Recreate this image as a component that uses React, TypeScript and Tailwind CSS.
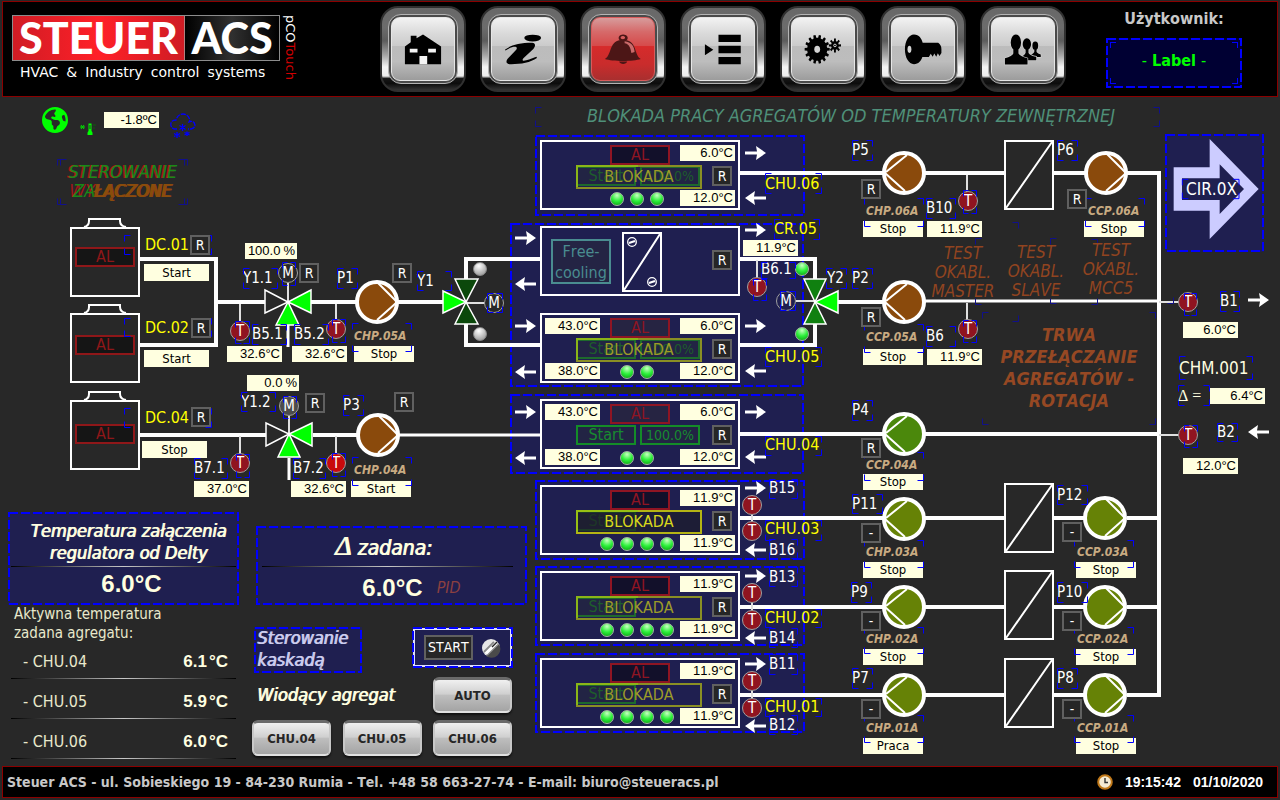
import React from 'react';
import { FaEarthAmericas } from 'react-icons/fa6';

type Kids = { children?: React.ReactNode };

const UI = "font-['DejaVu_Sans_Condensed','DejaVu_Sans',sans-serif] [font-kerning:none]";
const NUM = "font-['Liberation_Sans',sans-serif]";

/* Plan coordinates are counted from the top of the screen; the plan itself starts under the header. */
const PLAN_TOP = 97;

function At({ x, y, className = '', children }: { x: number; y: number; className?: string } & Kids) {
  return (
    <div className={`absolute whitespace-nowrap ${className}`} style={{ left: x, top: y - PLAN_TOP }}>
      {children}
    </div>
  );
}

function DashFrame() {
  return (
    <svg className="pointer-events-none absolute inset-0 h-full w-full overflow-visible" aria-hidden="true">
      <rect
        x="1"
        y="1"
        className="h-[calc(100%-2px)] w-[calc(100%-2px)]"
        fill="none"
        stroke="#0000ff"
        strokeWidth="2"
        strokeDasharray="9 3"
      />
    </svg>
  );
}

/* ---------- header ---------- */

function gear(cx: number, cy: number, r: number, depth: number, teeth: number) {
  const pts: string[] = [];
  const step = (Math.PI * 2) / teeth;
  for (let i = 0; i < teeth; i++) {
    const a = i * step;
    [[-0.3, r - depth], [-0.2, r], [0.2, r], [0.3, r - depth]].forEach(([k, d]) =>
      pts.push(`${(cx + Math.cos(a + k * step) * d).toFixed(1)} ${(cy + Math.sin(a + k * step) * d * 1.15).toFixed(1)}`),
    );
  }
  return `M${pts.join('L')}Z`;
}

const navItems: { label: string; alarm?: boolean; icon: React.ReactNode }[] = [
  {
    label: 'Home',
    icon: (
      <>
        <path d="M102 193V138L120 125V105H138V113L158 101L214 138V193Z" />
        <path d="M117 145h24v12h-24zM174 145h24v12h-24zM147 168h24v25h-24z" fill="#f4f4f4" />
      </>
    ),
  },
  {
    label: 'Info',
    icon: (
      <>
        <ellipse cx="188" cy="112" rx="26" ry="10.5" />
        <path d="M102 148C118 136 146 127 186 127C198 127 197 138 190 146L160 174C153 182 158 184 168 181C180 178 191 172 200 170L201 174C182 188 152 193 122 193C104 193 104 184 112 175L137 148C142 141 136 138 126 140C118 142 110 147 104 151Z" />
      </>
    ),
  },
  {
    label: 'Alarm',
    alarm: true,
    icon: (
      <g fill="#4c1616">
        <path fillRule="evenodd" d="M158 101a14 11 0 1 0 1 0ZM158 106a7 5 0 1 1-1 0Z" />
        <path d="M102 177C126 162 112 118 158 117C204 118 190 162 213 177C190 185 125 185 102 177Z" />
        <path d="M146 185h25c-2 10-23 10-25 0Z" />
        <path d="M163 122C184 124 193 138 194 155L184 158C181 140 176 130 163 128Z" fill="#c96a6a" />
      </g>
    ),
  },
  {
    label: 'Menu',
    icon: <path d="M102 131L128 148L102 165ZM144 102h69v22h-69zM144 136h69v23h-69zM144 171h69v22h-69z" />,
  },
  {
    label: 'Settings',
    icon: (
      <>
        <path d={gear(140, 147, 39, 8, 14)} />
        <ellipse cx="140" cy="147" rx="9" ry="11" fill="#d4d4d4" />
        <path d={gear(195, 135, 19, 7, 8)} />
        <circle cx="195" cy="135" r="4" fill="#000" stroke="#d4d4d4" strokeWidth="3" />
      </>
    ),
  },
  {
    label: 'Access',
    icon: (
      <>
        <path d="M130 101C146 101 154 114 157 127H205Q215 134 215 146V158L209 168L204 159L199 170L193 160L188 170L182 161L176 171H156C152 183 144 193 130 193C114 193 102 173 102 147S114 101 130 101Z" />
        <ellipse cx="116" cy="147" rx="6" ry="11" fill="#d4d4d4" />
      </>
    ),
  },
  {
    label: 'Users',
    icon: (
      <g stroke="#cfcfcf" strokeWidth="4" className="[paint-order:stroke]">
        <path d="M187 136a9 13 0 1 1 18 0a9 13 0 1 1 -18 0ZM183 171V163Q190 160 193 155V142H200V155Q204 160 213 163V171Z" />
        <path d="M157 131a13 18 0 1 1 26 0a13 18 0 1 1 -26 0ZM150 181V172Q163 166 166 158V140H175V158Q180 166 199 170V181Z" />
        <path d="M120 126a16 25 0 1 1 32 0a16 25 0 1 1 -32 0ZM102 194V175Q125 168 128 160V140H144V160Q148 168 172 175V194Z" />
      </g>
    ),
  },
];

function NavButton({ label, alarm, icon }: (typeof navItems)[number]) {
  return (
    <button
      aria-label={label}
      className="h-[86px] w-[86px] rounded-[18px] border-2 border-[#303030] bg-[linear-gradient(180deg,#686868_0%,#6c6c6c_24%,#5c5c5c_40%,#a8a8a8_58%,#f4f4f4_72%,#ececec_83%,#161616_86%,#0c0c0c_92%,#343434_100%)] p-[6px]"
    >
      <span className="block h-full w-full rounded-[13px] border border-[#b4b4b4] bg-[#4a4a4a] p-[2px]">
        <span
          className={`relative block h-full w-full overflow-hidden rounded-[9px] border ${
            alarm
              ? 'border-[#d85c5c] bg-[linear-gradient(180deg,#d79c9c_0%,#d66a6a_22%,#d64a4a_45%,#d62b2b_46%,#c92c2c_75%,#a92f2f_100%)]'
              : 'border-[#e6e6e6] bg-[linear-gradient(180deg,#f2f2f2_0%,#dadada_25%,#cbcbcb_45%,#bcbcbc_46%,#bdbdbd_70%,#9c9c9c_100%)]'
          }`}
        >
          <svg viewBox="62 50 192 192" className="absolute inset-0 h-full w-full" aria-hidden="true">
            {icon}
          </svg>
        </span>
      </span>
    </button>
  );
}

function Logo() {
  return (
    <div className="ml-[9px] mt-[9px] flex items-start gap-1">
      <div>
        <div className="flex h-[46px] border border-[#8c8c8c] font-['Lato',sans-serif] text-[43px] font-black leading-[43px] text-white">
          <span className="w-[172px] border-r border-[#b08080] bg-[linear-gradient(90deg,#d01c24,#ff2028_50%,#cf1c24)] text-center">STEUER</span>
          <span className="w-[94px] bg-[linear-gradient(90deg,#000,#303030_50%,#000)] text-center">ACS</span>
        </div>
        <div className="ml-2 flex gap-2 font-['DejaVu_Sans',sans-serif] text-[14px] leading-[22px] text-white">
          <span>HVAC</span>
          <span>&amp;</span>
          <span>Industry</span>
          <span>control</span>
          <span>systems</span>
        </div>
      </div>
      <div className="font-['DejaVu_Sans',sans-serif] text-[13px] leading-[12px] text-white [writing-mode:vertical-rl]">
        pCO<span className="text-[#d00000]">Touch</span>
      </div>
    </div>
  );
}

function Header() {
  return (
    <header className="mx-0.5 mt-px flex border border-[#8b0000] bg-black py-1">
      <div className="w-[377px]">
        <Logo />
      </div>
      <nav className="flex gap-[14px]">
        {navItems.map((n) => (
          <NavButton key={n.label} {...n} />
        ))}
      </nav>
      <div className={`ml-auto mr-[35px] w-[136px] text-center text-[16px] font-bold ${UI}`}>
        <div className="pb-[7px] pt-px leading-6 text-[#c8c8c8]">Użytkownik:</div>
        <button className="relative block h-[50px] w-full bg-[#000033] pb-1 text-[#00ff00]">
          <DashFrame />
          <span className="absolute inset-[4px] block">
            <Corner className="left-0 top-0 border-l border-t" />
            <Corner className="right-0 top-0 border-r border-t" />
            <Corner className="bottom-0 left-0 border-b border-l" />
            <Corner className="bottom-0 right-0 border-b border-r" />
          </span>
          <span className="font-normal">-</span> Label <span className="font-normal">-</span>
        </button>
      </div>
    </header>
  );
}

function Corner({ className }: { className: string }) {
  return <i className={`absolute h-[6px] w-[6px] border-[#0000ff] ${className}`} />;
}

/* ---------- plan: data ---------- */

type P2 = [number, number];

const brackets: [number, number, number, number][] = [
  [124, 235, 211, 254], [124, 318, 211, 336], [124, 408, 211, 427],
  [243, 268, 277, 288], [282, 262, 295, 285], [252, 324, 286, 344], [235, 321, 249, 343], [294, 324, 328, 344],
  [241, 392, 275, 411], [283, 396, 296, 418], [194, 458, 227, 478], [236, 454, 249, 477], [293, 458, 325, 478],
  [337, 268, 357, 288], [332, 319, 345, 342], [417, 271, 451, 290], [352, 323, 411, 351], [487, 293, 502, 312],
  [343, 395, 363, 415], [332, 453, 345, 476], [352, 457, 411, 485],
  [765, 173, 821, 193], [774, 219, 819, 239], [761, 262, 795, 278], [753, 279, 766, 300], [780, 291, 795, 310],
  [765, 347, 821, 366], [765, 436, 821, 455], [765, 520, 821, 540], [765, 609, 821, 627], [765, 698, 821, 716],
  [769, 479, 797, 498], [769, 539, 797, 558], [769, 567, 797, 586], [769, 628, 797, 647], [769, 654, 797, 674], [769, 715, 797, 734],
  [852, 140, 872, 160], [864, 198, 923, 226], [926, 198, 955, 218], [963, 190, 976, 213], [826, 268, 846, 288],
  [852, 268, 872, 288], [864, 324, 923, 352], [926, 326, 955, 346], [963, 320, 976, 342],
  [1057, 140, 1077, 160], [1085, 198, 1144, 226], [1184, 293, 1196, 315], [1220, 291, 1239, 311],
  [1179, 356, 1252, 379], [1178, 385, 1209, 405], [1184, 425, 1197, 447], [1217, 423, 1237, 441],
  [852, 400, 872, 420], [864, 452, 923, 480], [852, 494, 882, 513], [864, 540, 923, 567], [851, 582, 871, 602],
  [864, 627, 923, 653], [852, 668, 872, 688], [864, 715, 923, 742], [1057, 485, 1087, 504], [1074, 540, 1133, 567],
  [1057, 582, 1087, 602], [1074, 627, 1133, 654], [1057, 668, 1077, 688], [1074, 715, 1133, 742],
];

function bracket([a, b, c, d]: number[], n = 6) {
  const k = Math.min(n, Math.floor((c - a) / 2) - 1);
  return `M${a + k} ${b}H${a}V${b + n}M${c - k} ${b}H${c}V${b + n}M${a} ${d - n}V${d}H${a + k}M${c} ${d - n}V${d}H${c - k}`;
}

const faintBrackets =
  bracket([57, 159, 187, 204]) +
  bracket([60, 159, 184, 204]) +
  bracket([535, 107, 1159, 126]) +
  'M975 244V238H981M1050 244V238H1056M1091 239H1097V245M1167 237H1173V243M975 298V304H981M1050 298V303H1056M1091 304H1097V298M1167 303H1173V297' +
  'M982 318V312H988M1149 312H1155V318M982 418V424H988M1149 424H1155V418M1012 222H1018V228M1012 321H1018V315';

const tags: [number, number, string][] = [
  [190, 235, 'R'], [191, 318, 'R'], [191, 407, 'R'], [299, 263, 'R'], [305, 393, 'R'], [392, 263, 'R'], [394, 392, 'R'],
  [861, 179, 'R'], [861, 307, 'R'], [1067, 189, 'R'], [861, 438, 'R'], [861, 523, '-'], [861, 611, '-'], [861, 699, '-'],
  [1062, 522, '-'], [1062, 611, '-'], [1062, 699, '-'],
];

const temps: [number, number, string][] = [
  [227, 346, '32.6°C'], [292, 346, '32.6°C'], [194, 481, '37.0°C'], [291, 481, '32.6°C'], [104, 112, '-1.8ºC'],
  [743, 240, '11.9°C'], [927, 221, '11.9°C'], [927, 349, '11.9°C'], [1183, 322, '6.0°C'], [1210, 388, '6.4°C'], [1183, 458, '12.0°C'],
];

const states: [number, number, string][] = [
  [354, 346, 'Stop'], [351, 481, 'Start'], [863, 221, 'Stop'], [863, 349, 'Stop'], [1084, 221, 'Stop'], [863, 474, 'Stop'],
  [863, 562, 'Stop'], [863, 649, 'Stop'], [863, 738, 'Praca'], [1076, 562, 'Stop'], [1076, 649, 'Stop'], [1076, 738, 'Stop'],
];

const whiteLabels: [number, number, string][] = [
  [852, 150, 'P5'], [852, 278, 'P2'], [852, 410, 'P4'], [852, 504, 'P11'], [851, 592, 'P9'], [852, 678, 'P7'],
  [1057, 495, 'P12'], [1057, 592, 'P10'], [1057, 678, 'P8'], [1057, 150, 'P6'], [827, 278, 'Y2'], [243, 278, 'Y1.1'],
  [241, 402, 'Y1.2'], [337, 278, 'P1'], [343, 405, 'P3'], [417, 281, 'Y1'], [252, 334, 'B5.1'], [294, 334, 'B5.2'],
  [194, 468, 'B7.1'], [293, 468, 'B7.2'], [926, 208, 'B10'], [926, 336, 'B6'], [1220, 301, 'B1'], [1217, 432, 'B2'],
  [761, 269, 'B6.1'], [769, 488, 'B15'], [769, 550, 'B16'], [769, 577, 'B13'], [769, 638, 'B14'], [769, 664, 'B11'], [769, 725, 'B12'],
];

const yellowLabels: [number, number, string][] = [
  [145, 245, 'DC.01'], [145, 328, 'DC.02'], [145, 418, 'DC.04'], [765, 184, 'CHU.06'], [774, 229, 'CR.05'],
  [765, 357, 'CHU.05'], [765, 445, 'CHU.04'], [765, 529, 'CHU.03'], [765, 618, 'CHU.02'], [765, 707, 'CHU.01'],
];

const pumpLabels: [number, number, string][] = [
  [866, 211, 'CHP.06A'], [866, 337, 'CCP.05A'], [866, 465, 'CCP.04A'], [866, 552, 'CHP.03A'], [866, 639, 'CHP.02A'], [866, 728, 'CHP.01A'],
  [1088, 211, 'CCP.06A'], [1077, 552, 'CCP.03A'], [1077, 639, 'CCP.02A'], [1077, 728, 'CCP.01A'], [354, 336, 'CHP.05A'], [354, 470, 'CHP.04A'],
];

const BROWN = '#8a4a0c';
const OLIVE = '#668206';
const pumps: [number, number, string, 'left' | 'right'][] = [
  [377, 302, BROWN, 'right'], [378, 435, BROWN, 'right'], [904, 173, BROWN, 'left'], [904, 302, BROWN, 'left'],
  [904, 434, '#4b880c', 'left'], [904, 519, OLIVE, 'left'], [904, 607, OLIVE, 'left'], [904, 695, OLIVE, 'left'],
  [1106, 173, BROWN, 'right'], [1105, 518, OLIVE, 'right'], [1105, 607, OLIVE, 'right'], [1105, 695, OLIVE, 'right'],
];

const sensors: P2[] = [
  [240, 331], [336, 329], [240, 463], [968, 201], [968, 329], [757, 287], [1188, 302], [1188, 435],
  [752, 505], [752, 531], [752, 593], [752, 620], [752, 681], [752, 708],
];

const arrowsRight: P2[] = [
  [745, 153], [745, 230], [745, 326], [745, 412], [745, 488], [745, 576], [745, 664],
  [515, 238], [515, 326], [515, 412], [1248, 300],
];
const arrowsLeft: P2[] = [
  [745, 198], [745, 371], [745, 457], [745, 550], [745, 638], [745, 726], [515, 284], [515, 372], [515, 458], [1248, 432],
];

/* ---------- plan: parts ---------- */

function Led({ off = false }: { off?: boolean }) {
  return (
    <span
      className={`block h-[14px] w-[14px] rounded-full border ${
        off
          ? 'border-[#8c8c8c] bg-[radial-gradient(circle_at_40%_25%,#ffffff,#c4c4c4_50%,#8a8a8a)]'
          : 'border-[#a4b4a4] bg-[radial-gradient(circle_at_50%_20%,#c8ffc0,#2cf03a_50%,#08980f)]'
      }`}
    />
  );
}

function Round({ x, y, letter, fill }: { x: number; y: number; letter: string; fill: string }) {
  return (
    <At x={x - 10} y={y - 10} className={`flex h-5 w-5 items-center justify-center rounded-full border border-[#a0a0a0] text-[15px] leading-5 text-white ${fill}`}>
      {letter}
    </At>
  );
}

function Tag({ children }: Kids) {
  return <span className="flex h-5 w-5 items-center justify-center border-2 border-[#606060] bg-[#262626] text-[14px] leading-4 text-white">{children}</span>;
}

function Temp({ children }: Kids) {
  return <output className={`block h-4 w-[55px] bg-[#ffffe0] pr-0.5 text-right text-[13px] leading-4 text-black ${NUM}`}>{children}</output>;
}

function Alarm({ dark = false }: { dark?: boolean }) {
  return (
    <span className={`flex h-5 w-[60px] items-center justify-center border-2 border-[#8f1523] text-[16px] leading-4 text-[#8f1523] ${dark ? 'bg-[#12102a]' : 'bg-[#262442]'}`}>
      AL
    </span>
  );
}

function Tank({ y }: { y: number }) {
  return (
    <At x={70} y={y - 9}>
      <svg width="70" height="79" viewBox="0 0 70 79" fill="none" stroke="#fff" strokeWidth="2" aria-hidden="true">
        <path d="M1 10H69V78H1ZM14 9Q19 8 19 3V1H50V3Q50 8 56 9" />
      </svg>
    </At>
  );
}

function Pump({ x, y, fill, dir }: { x: number; y: number; fill: string; dir: 'left' | 'right' }) {
  return (
    <At x={x - 22} y={y - 22}>
      <svg width="44" height="44" viewBox="-22 -22 44 44" aria-hidden="true">
        <circle r="20" fill={fill} stroke="#fff" strokeWidth="4" />
        <path d={dir === 'right' ? 'M1 -19L19 -1M19 1L0 18' : 'M3 -18L-18 -1M-19 0L1 18'} stroke="#fff" strokeWidth="2" />
      </svg>
    </At>
  );
}

function Exchanger({ y }: { y: number }) {
  return (
    <At x={1004} y={y}>
      <svg width="50" height="70" viewBox="0 0 50 70" fill="none" stroke="#fff" strokeWidth="2" aria-hidden="true">
        <path d="M1 1H49V69H1ZM2 68L48 2" fill="#282828" />
      </svg>
    </At>
  );
}

function Arrow({ x, y, left = false }: { x: number; y: number; left?: boolean }) {
  return (
    <At x={x} y={y - 7}>
      <svg width="21" height="14" viewBox="0 0 21 14" fill="#fff" aria-hidden="true">
        <path d={left ? 'M21 5.5H9L10 0L0 7L10 14L9 8.5H21Z' : 'M0 5.5H12L11 0L21 7L11 14L12 8.5H0Z'} />
      </svg>
    </At>
  );
}

type ChillerProps = {
  y: number;
  leds: number;
  out: string;
  back: string;
  hot?: [string, string];
  mode: 'blocked' | 'bright' | 'run';
  started?: boolean;
};

function Chiller({ y, leds, out, back, hot, mode, started }: ChillerProps) {
  return (
    <At x={540} y={y} className="grid h-[70px] w-[200px] grid-cols-[55px_1fr_55px] border-2 border-white p-[3px] pb-[2px]">
      <div className="flex flex-col justify-between">
        {hot && <Temp>{hot[0]}</Temp>}
        {hot && <Temp>{hot[1]}</Temp>}
      </div>
      <div className="flex flex-col items-center justify-between">
        <Alarm dark={!hot} />
        <div className="flex gap-[6px] pr-1.5">
          {Array.from({ length: leds }, (_, i) => (
            <Led key={i} />
          ))}
        </div>
      </div>
      <div className="relative z-10 flex flex-col items-end justify-between">
        <Temp>{out}</Temp>
        <span className="mr-[3px]">
          <Tag>R</Tag>
        </span>
        <Temp>{back}</Temp>
      </div>
      <div className="absolute left-[34px] top-[23px] h-[24px] w-[126px]">
        <div className={`flex gap-1 pt-[1px] ${mode === 'run' ? 'text-[#188a30]' : 'text-[#1e5c2c]'}`}>
          <span className={`flex h-5 w-[60px] items-center justify-center border-2 bg-[#222444] text-[16px] leading-4 ${mode === 'run' ? 'border-[#148c28]' : 'border-[#1e6a2c]'}`}>Start</span>
          {started && (
            <span className={`flex h-5 w-[60px] items-center justify-center border-2 bg-[#222444] text-[14px] leading-4 ${mode === 'run' ? 'border-[#148c28]' : 'border-[#1e6a2c]'}`}>100.0%</span>
          )}
        </div>
        {mode !== 'run' && (
          <span
            className={`absolute inset-0 flex items-center justify-center border-2 text-[16px] leading-4 ${
              mode === 'bright' ? 'border-[#b4b414] bg-[#1c1c24]/60 text-[#d8d81c]' : 'border-[#8a8f24] text-[#9c9c28]'
            }`}
          >
            BLOKADA
          </span>
        )}
        {mode !== 'run' && <span className="absolute left-0 top-0 h-[22px] w-[62px] border-l-2 border-t-2 border-[#8cc414]/70" />}
      </div>
    </At>
  );
}

const frames: [number, number, number, number][] = [
  [535, 135, 270, 81], [510, 223, 294, 164], [510, 394, 294, 80], [535, 480, 270, 80], [535, 566, 270, 80], [535, 653, 270, 80],
];

function Plan() {
  return (
    <div className={`relative col-start-1 row-start-1 min-h-[669px] ${UI}`}>
      {frames.map(([x, y, w, h]) => (
        <div key={y} className="absolute bg-[#1f1f50]" style={{ left: x, top: y - PLAN_TOP, width: w, height: h }}>
          <DashFrame />
        </div>
      ))}

      <Chiller y={140} leds={3} out="6.0°C" back="12.0°C" mode="blocked" started />
      <At x={540} y={226} className="h-[70px] w-[200px] border-2 border-white">
        <span className="absolute left-[9px] top-[11px] flex h-[45px] w-[60px] items-center justify-center whitespace-pre border-2 border-[#4a8c90] bg-[#242444] text-center text-[16px] leading-[21px] text-[#4a8c90]">
          {'Free-\ncooling'}
        </span>
        <svg className="absolute left-[80px] top-[4px]" width="40" height="60" viewBox="0 0 40 60" fill="none" stroke="#fff" strokeWidth="2" aria-hidden="true">
          <path d="M1 1H39V59H1ZM2 58L38 2" />
          <g strokeWidth="1.3">
            <circle cx="10" cy="10" r="4.3" />
            <circle cx="30" cy="50" r="4.3" />
            <path d="M7 11L13 9M27 51L33 49" strokeWidth="2" />
          </g>
        </svg>
        <span className="absolute right-[6px] top-[22px]">
          <Tag>R</Tag>
        </span>
      </At>
      <Chiller y={313} leds={2} out="6.0°C" back="12.0°C" hot={['43.0°C', '38.0°C']} mode="blocked" started />
      <Chiller y={399} leds={2} out="6.0°C" back="12.0°C" hot={['43.0°C', '38.0°C']} mode="run" started />
      <Chiller y={485} leds={4} out="11.9°C" back="11.9°C" mode="bright" />
      <Chiller y={571} leds={4} out="11.9°C" back="11.9°C" mode="blocked" />
      <Chiller y={658} leds={4} out="11.9°C" back="11.9°C" mode="blocked" />

      {/* pipes and three-way valves */}
      <svg className="pointer-events-none absolute inset-0 h-full w-full" aria-hidden="true">
        <g transform={`translate(0 ${-PLAN_TOP})`} fill="none" stroke="#fff">
          <path
            strokeWidth="4"
            d="M139 259H216V345H139M216 302H265M311 302H357M398 302H443M466 280V259H540M466 324V345H540M139 435H267M313 435H358M740 173H884M925 173H1004M1054 173H1085M1127 173H1159V697M740 259H815V280M740 345H815V324M838 302H884M740 434H884M925 434H1159M740 518H884M925 518H1004M1054 518H1085M1127 518H1159M740 607H884M925 607H1004M1054 607H1085M1127 607H1159M740 695H884M925 695H1004M1054 695H1085M1127 695H1161"
          />
          <path strokeWidth="3" d="M399 435H541M925 301H1159M288 324V347M289 458V480" />
          <path
            strokeWidth="2"
            stroke="#e0e0e0"
            d="M1159 302H1179M1159 435H1179M288 283V302M289 416V434M466 303H485M796 301H815M240 304V322M336 304V320M240 436V454M336 436V454M967 175V192M967 303V320M757 260V278M752 505V531M752 593V620M752 681V708"
          />
          <g strokeWidth="1.5">
            <path d="M265 290L288 302L265 313Z" fill="#282828" />
            <path d="M311 290L288 302L311 313ZM276 325L288 302L299 325Z" fill="#00ff00" />
            <path d="M266 423L289 434L266 446Z" fill="#282828" />
            <path d="M312 423L289 434L312 446ZM278 457L289 434L300 457Z" fill="#00ff00" />
            <path d="M455 279L466 302L478 279ZM455 324L466 302L478 324Z" fill="#0b480b" />
            <path d="M443 291L466 302L443 313Z" fill="#00ff00" />
            <path d="M804 279L815 302L826 279ZM804 324L815 302L826 324Z" fill="#108010" />
            <path d="M838 291L815 302L838 313Z" fill="#00ff00" />
          </g>
          <path d={faintBrackets} stroke="#10108c" transform="translate(.5 .5)" />
        </g>
      </svg>

      {[227, 313, 400].map((y) => (
        <Tank key={y} y={y} />
      ))}
      {[247, 335, 424].map((y) => (
        <At key={y} x={75} y={y}>
          <span className="flex h-5 w-[60px] items-center justify-center border-2 border-[#8f1719] bg-[#151515] text-[16px] leading-4 text-[#8f1719]">AL</span>
        </At>
      ))}
      {[140, 483, 570, 658].map((y) => (
        <Exchanger key={y} y={y} />
      ))}
      {pumps.map(([x, y, fill, dir]) => (
        <Pump key={`${x}-${y}`} x={x} y={y} fill={fill} dir={dir} />
      ))}
      {sensors.map(([x, y]) => (
        <Round key={`${x}-${y}`} x={x} y={y} letter="T" fill="bg-[#901420]" />
      ))}
      <Round x={336} y={463} letter="T" fill="bg-[#c80a0c]" />
      <Round x={288} y={273} letter="M" fill="bg-[#282828]" />
      <Round x={289} y={406} letter="M" fill="bg-[#4c4c4c]" />
      <Round x={494} y={303} letter="M" fill="bg-[#282828]" />
      <Round x={786} y={301} letter="M" fill="bg-[#1f1f50]" />
      {[269, 334].map((y) => (
        <React.Fragment key={y}>
          <At x={473} y={y - 7}><Led off /></At>
          <At x={795} y={y - 7}><Led /></At>
        </React.Fragment>
      ))}
      {arrowsRight.map(([x, y]) => (
        <Arrow key={`${x}-${y}`} x={x} y={y} />
      ))}
      {arrowsLeft.map(([x, y]) => (
        <Arrow key={`${x}-${y}`} x={x} y={y} left />
      ))}

      {temps.map(([x, y, t]) => (
        <At key={`${x}-${y}`} x={x} y={y}><Temp>{t}</Temp></At>
      ))}
      {([[245, 243, '100.0'], [247, 375, '0.0']] as [number, number, string][]).map(([x, y, t]) => (
        <At key={y} x={x} y={y} className={`flex h-4 w-[52px] justify-end gap-[3px] bg-[#ffffe0] pr-0.5 text-[13px] leading-4 text-black ${NUM}`}>
          <output>{t}</output>
          <span>%</span>
        </At>
      ))}
      {([[144, 264, 'Start'], [144, 350, 'Start'], [142, 441, 'Stop']] as [number, number, string][]).map(([x, y, t]) => (
        <At key={y} x={x} y={y} className="h-[17px] w-[65px] bg-[#ffffe0] text-center text-[13px] leading-[17px] text-black">{t}</At>
      ))}
      {states.map(([x, y, t]) => (
        <At key={`${x}-${y}`} x={x} y={y} className="h-4 w-[60px] bg-[#ffffe0] text-center text-[13px] leading-4 text-black">{t}</At>
      ))}
      {whiteLabels.map(([x, y, t]) => (
        <At key={t} x={x} y={y - 10} className="text-[15px] leading-5 text-white">{t}</At>
      ))}
      {yellowLabels.map(([x, y, t]) => (
        <At key={t} x={x} y={y - 10} className="text-[16px] leading-5 text-[#ffff00]">{t}</At>
      ))}
      {pumpLabels.map(([x, y, t]) => (
        <At key={t} x={x} y={y - 8} className="text-[12px] font-bold italic leading-4 text-[#c8ab82]">{t}</At>
      ))}

      <svg className="pointer-events-none absolute inset-0 h-full w-full" aria-hidden="true">
        <path d={brackets.map((b) => bracket(b)).join('')} fill="none" stroke="#0000ff" transform={`translate(.5 ${0.5 - PLAN_TOP})`} />
      </svg>
      {tags.map(([x, y, t]) => (
        <At key={`${x}-${y}`} x={x} y={y}><Tag>{t}</Tag></At>
      ))}

      <At x={587} y={106} className="text-[18px] italic leading-5 text-[#4f9079]">
        BLOKADA PRACY AGREGATÓW OD TEMPERATURY ZEWNĘTRZNEJ
      </At>
      {([[963, 244, 'TEST\nOKABL.\nMASTER'], [1036, 243, 'TEST\nOKABL.\nSLAVE'], [1111, 241, 'TEST\nOKABL.\nMCC5']] as [number, number, string][]).map(([x, y, t]) => (
        <At key={x} x={x} y={y} className="-translate-x-1/2 whitespace-pre text-center text-[17px] italic leading-[19px] text-[#914420]">{t}</At>
      ))}
      <At x={1069} y={324} className="-translate-x-1/2 whitespace-pre text-center text-[18px] font-bold italic leading-[22px] text-[#964823]">
        {'TRWA\nPRZEŁĄCZANIE\nAGREGATÓW -\nROTACJA'}
      </At>
      <At x={121} y={162} className="-translate-x-1/2 whitespace-pre text-center text-[18px] italic leading-[19px] text-[#a01818]">
        {'STEROWANIE\nWYŁĄCZONE'}
      </At>
      <At x={123} y={162} className="-translate-x-1/2 text-center text-[18px] italic leading-[19px] text-[#188a18]">
        STEROWANIE
        <br />
        ZA<span className="text-[#8a4c0c] [text-shadow:-1px_0_0_#8a4c0c,-2px_0_0_#8a4c0c]">ŁĄCZONE</span>
      </At>

      <At x={42} y={107} className="text-[#00ff00]"><FaEarthAmericas size={26} /></At>
      <At x={80} y={122}>
        <svg width="16" height="14" viewBox="0 0 16 14" aria-hidden="true">
          <path d="M8.5 1.5h3V9q1 1 1 2v2h-5v-2q0-1 1-2Z" fill="#00ff00" />
          <path d="M9.5 3h1v4h-1z" fill="#282828" />
          <path d="M0 5h5M1 3l3 4M4 3L1 7" stroke="#00e000" />
          <path d="M13 3h3M13 6h2" stroke="#0a600a" />
        </svg>
      </At>
      <At x={170} y={113}>
        <svg width="26" height="26" viewBox="0 0 26 26" fill="none" stroke="#0000ff" strokeWidth="1.3" aria-hidden="true">
          <path d="M7 16H4Q0 14 1 10Q2 7 6 7Q8 1 13 1Q18 1 20 7L19 9Q24 7 25 12Q25 15 21 16H18" strokeDasharray="5 1" />
          <path d="M12.500 11V18M9.500 12.500L15.500 16.500M15.500 12.500L9.500 16.500M7 19V25M4 20.500L10 23.500M10 20.500L4 23.500M17 18.500V23M14.500 19.500L19.500 22M19.500 19.500L14.500 22" />
        </svg>
      </At>

      <At x={1165} y={134} className="h-[118px] w-[99px]">
        <button className="relative h-full w-full bg-[#1f1f50] text-white">
          <DashFrame />
          <svg className="absolute inset-0" width="99" height="118" viewBox="0 0 297 354" aria-hidden="true">
            <path fillRule="evenodd" fill="#ccccff" d="M26 100H134V15L281 165L134 315V230H26ZM51 133V198H164V240L237 165L164 91V133Z" />
            <path d={bracket([52, 136, 222, 194], 18)} fill="none" stroke="#0000ff" strokeWidth="3" />
          </svg>
          <span className="absolute inset-x-0 top-[45px] pr-[6px] text-[17px] leading-5">CIR.0X</span>
        </button>
      </At>
      <At x={1179} y={357} className="text-[17px] leading-[22px] text-[#ffffe0]">CHM.001</At>
      <At x={1178} y={386} className="font-['Liberation_Serif',serif] text-[16px] leading-5 text-[#ffffe0]">Δ =</At>
    </div>
  );
}

/* ---------- operator controls ---------- */

function Divider() {
  return <div className="h-px bg-[linear-gradient(90deg,#000,#c8c8c8_50%,#000)]" />;
}

function MetalButton({ children }: Kids) {
  return (
    <button className="h-9 w-[79px] rounded-md border-t-[3px] border-x-2 border-b-2 border-x-[#c8c8c8] border-b-[#e0e0e0] border-t-[#6a6a6a] bg-[linear-gradient(180deg,#f0f0f0_0%,#d0d0d0_45%,#bebebe_50%,#a4a4a4_100%)] text-[13px] font-bold text-[#262626] shadow-[0_2px_2px_#111]">
      {children}
    </button>
  );
}

const setpoints: [string, string][] = [['CHU.04', '6.1'], ['CHU.05', '5.9'], ['CHU.06', '6.0']];

function Controls() {
  return (
    <section className={`relative col-start-1 row-start-1 ml-2 flex w-[520px] items-end justify-between self-end text-[#ffffe0] ${UI}`}>
      <div className="w-[231px] pb-[7px]">
        <div className="relative bg-[#1f1f50] px-[3px] pt-2 text-center">
          <DashFrame />
          <h2 className="pb-[2px] pl-[10px] text-[18px] italic leading-[22px] [text-shadow:1px_0_0_currentColor]">
            Temperatura załączenia
            <br />
            regulatora od Delty
          </h2>
          <Divider />
          <output className={`block pb-1 pl-4 text-[24px] font-bold leading-[34px] ${NUM}`}>6.0°C</output>
        </div>
        <p className="pl-1.5 text-[15px] leading-[19px] text-[#e8e8cc]">
          Aktywna temperatura
          <br />
          zadana agregatu:
        </p>
        <div className="px-[3px]">
          {setpoints.map(([name, value], i) => (
            <div key={name}>
              <div className={`flex items-end justify-between pb-1 pl-3 pr-2 text-[16px] leading-6 ${i === 0 ? 'pt-[7px]' : 'pt-[11px]'}`}>
                <span className="text-[#e8e8cc]">- {name}</span>
                <output className={`flex gap-0.5 text-[17px] font-bold ${NUM}`}>
                  {value}
                  <span>°C</span>
                </output>
              </div>
              <Divider />
            </div>
          ))}
        </div>
      </div>

      <div className="w-[276px] pb-[10px]">
        <div className="relative ml-[4px] w-[271px] bg-[#1f1f50] px-[6px] pt-[5px]">
          <DashFrame />
          <h2 className="pb-[1px] pr-4 text-center text-[21px] italic leading-[34px] [text-shadow:1px_0_0_currentColor]">
            <span className="font-['Liberation_Serif',serif] text-[28px] leading-6">Δ</span> zadana:
          </h2>
          <div className="pr-[8px]"><Divider /></div>
          <div className="flex items-center justify-center gap-[14px] pl-[40px] pt-[3px] leading-[35px]">
            <output className={`text-[24px] font-bold ${NUM}`}>6.0°C</output>
            <span className="text-[16px] italic text-[#8c4040]">PID</span>
          </div>
        </div>
        <div className="mt-[22px] flex items-start justify-between pr-[15px]">
          <div className="relative ml-[2px] w-[108px] bg-[#1f1f50] px-[3px] pb-[2px] text-[18px] italic leading-[22px] text-[#ccccee] [text-shadow:1px_0_0_currentColor]">
            <DashFrame />
            Sterowanie
            <br />
            kaskadą
          </div>
          <button className="relative flex h-[41px] w-[101px] items-center gap-[8px] bg-[#1f1f50] pl-[12px] text-white">
            <span className="pointer-events-none absolute inset-px border-2 border-[#dcdcff]" />
            <DashFrame />
            <span className="border-2 border-[#606060] bg-[#262626] px-[2px] text-[14px] leading-[21px]">START</span>
            <svg width="20" height="20" viewBox="0 0 20 20" aria-hidden="true">
              <circle cx="10" cy="10" r="9" fill="#e6e6e6" />
              <path d="M18 6A9 9 0 0 1 5 18Z" fill="#4a4a4a" />
              <path d="M3 14L13 4M6 17L17 6" stroke="#8a8a8a" strokeWidth="2" />
              <path d="M5 15.500L15.500 5" stroke="#fff" strokeWidth="3" />
              <path d="M11 9L16 4" stroke="#222" strokeWidth="1.500" />
            </svg>
          </button>
        </div>
        <div className="mt-1 flex items-center justify-between pr-4">
          <h3 className="pl-[5px] text-[18px] italic leading-6 [text-shadow:1px_0_0_currentColor]">Wiodący agregat</h3>
          <MetalButton>AUTO</MetalButton>
        </div>
        <div className="mt-[7px] flex justify-between pr-4">
          <MetalButton>CHU.04</MetalButton>
          <MetalButton>CHU.05</MetalButton>
          <MetalButton>CHU.06</MetalButton>
        </div>
      </div>
    </section>
  );
}

function Footer() {
  return (
    <footer className={`mx-0.5 mb-0.5 flex items-center justify-between border border-[#8b0000] bg-black pl-1 pr-[14px] text-[14px] font-bold leading-[30px] text-[#c8c8c8] ${UI}`}>
      <span>
        Steuer ACS - ul. Sobieskiego 19 - 84-230 Rumia - Tel. +48 58 663-27-74 - E-mail: <a href="mailto:biuro@steueracs.pl">biuro@steueracs.pl</a>
      </span>
      <span className={`flex items-center gap-3 text-[14px] text-white ${NUM}`}>
        <svg width="16" height="16" viewBox="0 0 16 16" aria-hidden="true">
          <circle cx="8" cy="8" r="6.800" fill="#f4ead2" stroke="#c07818" strokeWidth="2" />
          <path d="M8 4V8.500H11" fill="none" stroke="#333" strokeWidth="1.400" />
        </svg>
        <time>19:15:42</time>
        <time>01/10/2020</time>
      </span>
    </footer>
  );
}

export default function App() {
  return (
    <div className="flex min-h-screen flex-col bg-[#282828]">
      <Header />
      <main className="grid flex-1">
        <Plan />
        <Controls />
      </main>
      <Footer />
    </div>
  );
}
